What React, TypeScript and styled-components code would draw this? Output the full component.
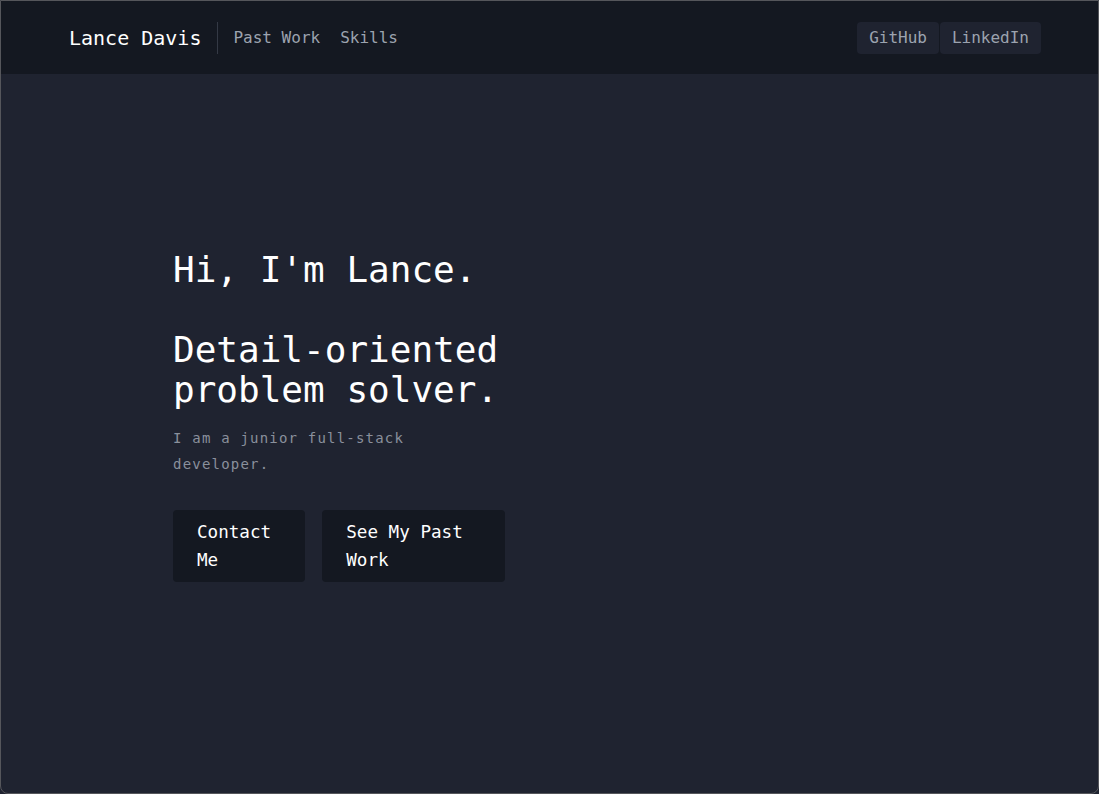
import React from "react";
import styled, { createGlobalStyle } from "styled-components";

const GlobalStyle = createGlobalStyle`
  html, body { margin: 0; padding: 0; background: #1f2330; }
  * { box-sizing: border-box; }
  body { font-family: "DejaVu Sans Mono", "Liberation Mono", monospace; }
`;

const Frame = styled.div`
  width: 1099px;
  height: 794px;
  border: 1px solid #55565b;
  border-radius: 0 0 8px 8px;
  background: #1f2330;
  display: flex;
  flex-direction: column;
  overflow: hidden;
`;

const Header = styled.header`
  height: 73px;
  flex: none;
  background: #141821;
  display: flex;
  align-items: center;
  padding: 0 57px 0 68px;
`;

const Brand = styled.a`
  font-size: 20px;
  color: #ffffff;
  text-decoration: none;
`;

const Divider = styled.span`
  width: 1px;
  height: 32px;
  background: #343945;
  margin: 0 15px 0 16px;
`;

const NavLinks = styled.nav`
  display: flex;
  gap: 20px;
`;

const NavLink = styled.a`
  font-size: 16px;
  color: #9ca3af;
  text-decoration: none;
`;

const Spacer = styled.div`
  flex: 1;
`;

const Social = styled.div`
  display: flex;
  gap: 1px;
`;

const SocialButton = styled.a`
  height: 32px;
  display: flex;
  align-items: center;
  padding: 0 12px;
  border-radius: 4px;
  background: #1f2330;
  color: #9ca3af;
  font-size: 16px;
  text-decoration: none;
`;

const Main = styled.main`
  flex: 1;
  padding: 176px 0 0 172px;
`;

const Hero = styled.section`
  width: 332px;
`;

const Title = styled.h1`
  margin: 0;
  font-size: 36px;
  line-height: 40px;
  font-weight: normal;
  color: #ffffff;
`;

const Lead = styled.p`
  margin: 15px 0 0;
  font-size: 14px;
  letter-spacing: 1.2px;
  line-height: 26px;
  color: #8a909c;
`;

const Actions = styled.div`
  display: flex;
  gap: 17px;
  margin-top: 33px;
`;

const ActionButton = styled.button`
  font-family: inherit;
  font-size: 17.6px;
  line-height: 28px;
  color: #ffffff;
  background: #141821;
  border: none;
  border-radius: 4px;
  padding: 8px 24px;
  text-align: left;
  cursor: pointer;
`;

export default function App() {
  return (
    <>
      <GlobalStyle />
      <Frame>
        <Header>
          <Brand href="#">Lance Davis</Brand>
          <Divider />
          <NavLinks>
            <NavLink href="#">Past Work</NavLink>
            <NavLink href="#">Skills</NavLink>
          </NavLinks>
          <Spacer />
          <Social>
            <SocialButton href="#">GitHub</SocialButton>
            <SocialButton href="#">LinkedIn</SocialButton>
          </Social>
        </Header>
        <Main>
          <Hero>
            <Title>
              Hi, I'm Lance.
              <br />
              <br />
              Detail-oriented problem solver.
            </Title>
            <Lead>I am a junior full-stack developer.</Lead>
            <Actions>
              <ActionButton>Contact Me</ActionButton>
              <ActionButton>See My Past Work</ActionButton>
            </Actions>
          </Hero>
        </Main>
      </Frame>
    </>
  );
}
